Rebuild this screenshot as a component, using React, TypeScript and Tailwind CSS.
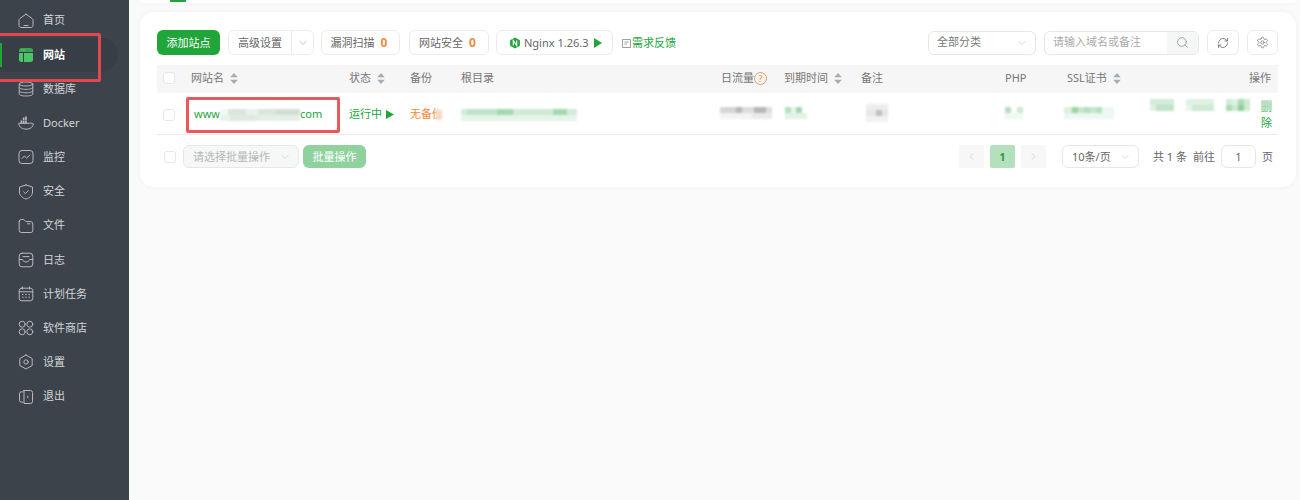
import { ChevronDown, ChevronLeft, ChevronRight, RefreshCw, Search, Settings } from "lucide-react";
import React from "react";

const ic = { width: 16, height: 16, viewBox: "0 0 16 16", fill: "none", stroke: "#b4b9bf", strokeWidth: 1, strokeLinejoin: "round" as const, strokeLinecap: "round" as const };

const HomeIcon = () => (
  <svg {...ic}><path d="M8 1.2 14.2 5.6c.5.4.8.9.8 1.5v5.4c0 1.2-.9 2-2 2H3c-1.100 0-2-.8-2-2V7.100c0-.6.300-1.100.8-1.500L8 1.200Z" /><path d="M6 12.500h4" /></svg>
);
const SiteIcon = () => (
  <svg width="16" height="16" viewBox="0 0 16 16"><path d="M3.500 1h9A2.500 2.500 0 0 1 15 3.500V5H1V3.500A2.500 2.500 0 0 1 3.500 1Z" fill="#3aa655" /><path d="M1 6h4v9H3.500A2.500 2.500 0 0 1 1 12.500V6Z" fill="#4cc568" /><path d="M6 6h9v6.500a2.500 2.500 0 0 1-2.500 2.500H6V6Z" fill="#4cc568" /><path d="M3.500 3h3" stroke="#a5e0b3" strokeWidth="0.8" strokeDasharray="1 1" /></svg>
);
const DbIcon = () => (
  <svg {...ic}><ellipse cx="8" cy="3" rx="6.800" ry="2" /><path d="M1.200 3v10c0 1.100 3 2 6.800 2s6.800-.9 6.800-2V3" /><path d="M1.200 6.400c0 1.100 3 2 6.800 2s6.800-.9 6.800-2M1.200 9.800c0 1.100 3 2 6.800 2s6.800-.9 6.800-2" /></svg>
);
const DockerIcon = () => (
  <svg width="16" height="16" viewBox="0 0 16 16" fill="#b4b9bf"><path d="M.600 8.300h11c.5 0 .9-.2 1.300-.2.800 0 1.900.3 2.500.8-.4 3.100-3.200 5.300-6.900 5.300-4.200 0-7.300-1.900-7.900-5.900Z" fill="none" stroke="#b4b9bf" /><path d="M2.500 5.500h1.700v3H2.500zM4.800 5.500h1.700v3H4.800zM7.100 5.500h1.700v3H7.100zM4.800 2.500h1.700v2.500H4.800zM7.100 1.500h1.700v3.500H7.100z" /></svg>
);
const MonitorIcon = () => (
  <svg {...ic}><rect x="1" y="1.500" width="14" height="13" rx="2.800" /><path d="M4 9.500 6.300 7l2.400 2 3.300-3" /></svg>
);
const ShieldIcon = () => (
  <svg {...ic}><path d="M8 1 14.500 3v5c0 3.500-2.800 5.900-6.500 7-3.700-1.100-6.500-3.500-6.500-7V3L8 1Z" /><path d="m5.700 8 1.700 1.600 2.900-3" /></svg>
);
const FolderIcon = () => (
  <svg {...ic}><path d="M1.200 3.500A2 2 0 0 1 3.200 1.500h2.600l2 2h4.500a2.500 2.500 0 0 1 2.500 2.500v6.500a2 2 0 0 1-2 2H3.200a2 2 0 0 1-2-2v-9Z" /><path d="M9.500 5.800h2.500" /></svg>
);
const LogIcon = () => (
  <svg {...ic}><rect x="1.200" y="1.200" width="13.600" height="13.600" rx="2.800" /><path d="M1.200 7.500h3.300c.4 1.500 1.800 2.400 3.500 2.400s3.100-.9 3.500-2.400h3.300" /><path d="M5 4.600h6" /></svg>
);
const CalendarIcon = () => (
  <svg {...ic}><rect x="1.200" y="2.200" width="13.600" height="12.600" rx="2.500" /><path d="M1.200 5.800h13.600M4.500 1v2M11.500 1v2" /><path d="M4.500 8.500h.6M7.700 8.500h.6M10.900 8.500h.6M4.500 11.200h.6M7.700 11.200h.6M10.900 11.200h.6" /></svg>
);
const StoreIcon = () => (
  <svg {...ic}><circle cx="4.200" cy="4.200" r="3" /><circle cx="11.800" cy="4.200" r="3" /><circle cx="4.200" cy="11.800" r="3" /><circle cx="11.800" cy="11.800" r="3" /></svg>
);
const GearIcon = () => (
  <svg {...ic}><path d="M8 1 14.200 4.500v7L8 15l-6.200-3.500v-7L8 1Z" /><circle cx="8" cy="8" r="2.200" /></svg>
);
const ExitIcon = () => (
  <svg {...ic}><path d="M5 2.800H3.500a2 2 0 0 0-2 2v6.400a2 2 0 0 0 2 2H5" /><path d="M6 1.500h6.500a2 2 0 0 1 2 2v9a2 2 0 0 1-2 2H6V1.500Z" /><path d="M9.800 7.200v1.600" /></svg>
);

const menu: [string, React.ReactNode][] = [
  ["首页", <HomeIcon />],
  ["网站", <SiteIcon />],
  ["数据库", <DbIcon />],
  ["Docker", <DockerIcon />],
  ["监控", <MonitorIcon />],
  ["安全", <ShieldIcon />],
  ["文件", <FolderIcon />],
  ["日志", <LogIcon />],
  ["计划任务", <CalendarIcon />],
  ["软件商店", <StoreIcon />],
  ["设置", <GearIcon />],
  ["退出", <ExitIcon />],
];

function Sidebar() {
  return (
    <div className="relative w-[129px] shrink-0 bg-[#3c434b] pt-[3.500px]">
      {menu.map(([label, icon]) => (
        <div key={label} className="relative flex h-[34.2px] items-center gap-[9px] pl-[18px]">
          {label === "网站" && (
            <>
              <div className="absolute left-0 top-0 h-full w-[118px] rounded-r-full bg-[#373e45]" />
              <div className="absolute left-0 top-[5px] h-[24px] w-[2px] bg-[#20a53a]" />
            </>
          )}
          <span className="relative flex">{icon}</span>
          <span className={label === "网站" ? "relative text-[11px] font-bold text-white" : "relative text-[11px] text-[#d3d6d9]"}>{label}</span>
        </div>
      ))}
      <div className="absolute left-[-3px] top-[33px] h-[49px] w-[104px] rounded-[2px] border-[3px] border-[#e2484d]" />
    </div>
  );
}

function ToolBtn({ children }: { children: React.ReactNode }) {
  return <div className="flex h-[25px] items-center rounded-md border border-[#ebeced] bg-white text-[11px] text-[#666]">{children}</div>;
}

function Count({ label, w }: { label: string; w: string }) {
  return (
    <div className={`flex h-[25px] ${w} items-center justify-center gap-[6px] rounded-md border border-[#ebeced] bg-white pr-[3px] pt-px text-[11px] text-[#666]`}>
      {label}
      <span className="text-[12px] font-bold leading-none text-[#ef8a3c]">0</span>
    </div>
  );
}

function Check({ className = "" }: { className?: string }) {
  return <div className={`h-[12px] w-[12px] rounded-[3px] border border-[#e6e7e9] bg-white ${className}`} />;
}

function Sort() {
  return (
    <svg width="8" height="11" viewBox="0 0 8 11" fill="#a9acb0" className="ml-[6px]"><path d="M4 0 7.800 4.300H.2L4 0ZM4 11 .2 6.700h7.600L4 11Z" /></svg>
  );
}

// pixelated patches over the hidden values
function Mosaic({ rows, className = "" }: { rows: string[][]; className?: string }) {
  return (
    <div className={`flex flex-col blur-[1px] ${className}`}>
      {rows.map((row, i) => (
        <div key={i} className="flex h-[6px]">
          {row.map((c, j) => (
            <div key={j} className={c} />
          ))}
        </div>
      ))}
    </div>
  );
}

function Header() {
  const cell = "flex items-center";
  return (
    <div className="grid h-[28px] grid-cols-[34px_158px_61px_51px_261px_62px_77px_144px_62px_83px_1fr] items-center bg-[#f6f6f6] pb-[2px] text-[11px] text-[#777]">
      <div className="pl-[6px]"><Check /></div>
      <div className={cell}>网站名<Sort /></div>
      <div className={cell}>状态<Sort /></div>
      <div>备份</div>
      <div>根目录</div>
      <div className={`${cell} ml-[-1px]`}>
        日流量
        <span className="flex h-[13px] w-[13px] items-center justify-center rounded-full border border-[#ef9a5c] text-[9px] leading-none text-[#ef8a3c]">?</span>
      </div>
      <div className={cell}>到期时间<Sort /></div>
      <div>备注</div>
      <div>PHP</div>
      <div className={cell}>SSL证书<Sort /></div>
      <div className="pr-[7px] text-right">操作</div>
    </div>
  );
}

function Row() {
  return (
    <div className="grid h-[42px] grid-cols-[34px_158px_61px_51px_261px_62px_77px_144px_62px_83px_1fr] items-center border-b border-[#e9e9ef] pt-[2px] text-[11px]">
      <div className="pl-[6px]"><Check /></div>
      <div className="relative flex h-full items-center pl-[3px] text-[11px] text-[#20a53a]">
        <span>www</span>
        <Mosaic
          className="w-[80px]"
          rows={[["w-[8px] bg-[#f4f8f5]", "w-[18px] bg-[#d9e6dc]", "w-[12px] bg-[#eaf0ec]", "w-[18px] bg-[#d9e6dc]", "w-[24px] bg-[#cfe0d3]"], ["w-[10px] bg-[#eaf1ec]", "w-[26px] bg-[#dfe9e2]", "w-[22px] bg-[#e6eee8]", "w-[22px] bg-[#e6eee8]"]]}
        />
        <span>com</span>
        <div className="absolute left-[-5px] top-[2px] h-[36px] w-[154px] rounded-[2px] border-[3px] border-[#ea585c]" />
      </div>
      <div className="flex items-center text-[#20a53a]">
        运行中
        <svg width="8" height="9" viewBox="0 0 8 9" className="ml-[4px]" fill="#20a53a"><path d="M0 0 8 4.500 0 9Z" /></svg>
      </div>
      <div className="relative text-[#ef8a3c]">
        <span className="block whitespace-nowrap">无备份</span>
        <div className="absolute left-[27px] top-0 h-full w-[9px] bg-white blur-[1px]" />
        <div className="absolute left-[26px] top-[4px] h-[10px] w-[6px] bg-[#f8d9c2] blur-[1px]" />
      </div>
      <Mosaic
        className="w-[116px]"
        rows={[["w-[6px] bg-[#d3ebd8]", "w-[30px] bg-[#bfe3c7]", "w-[16px] bg-[#a3d8af]", "w-[40px] bg-[#cfe9d5]", "w-[14px] bg-[#a3d8af]", "w-[10px] bg-[#d3ebd8]"], ["w-[116px] bg-[#e5f4e8]"]]}
      />
      <Mosaic
        className="ml-[-2px] mt-[-3px] w-[52px]"
        rows={[["w-[16px] bg-[#d3d5d7]", "w-[6px] bg-[#b5b7b9]", "w-[12px] bg-[#dcdddf]", "w-[12px] bg-[#b5b7b9]", "w-[6px] bg-[#dcdddf]"], ["w-[32px] bg-[#f3f3f4]", "w-[20px] bg-[#e9eaeb]"]]}
      />
      <Mosaic
        className="ml-[1px] mt-[-3px] w-[22px]"
        rows={[["w-[6px] bg-[#b5dfbf]", "w-[5px] bg-[#e9f5ec]", "w-[6px] bg-[#a3d8af]", "w-[5px] bg-white"], ["w-[22px] bg-[#e3f3e7]"]]}
      />
      <Mosaic
        className="ml-[5px] mt-[-3px] w-[22px]"
        rows={[["w-[22px] bg-[#eeeeef]"], ["w-[10px] bg-[#e8e8e9]", "w-[6px] bg-[#bfc0c1]", "w-[6px] bg-[#e4e5e6]"], ["w-[22px] bg-[#f2f2f3]"]]}
      />
      <Mosaic
        className="mt-[-3px] w-[18px]"
        rows={[["w-[6px] bg-[#b5dfbf]", "w-[6px] bg-white", "w-[6px] bg-[#cfe9d5]"], ["w-[18px] bg-[#f0f8f2]"]]}
      />
      <Mosaic
        className="ml-[-3px] mt-[-3px] w-[50px]"
        rows={[["w-[8px] bg-[#dcefe0]", "w-[6px] bg-[#98d3a5]", "w-[6px] bg-[#c8e6cf]", "w-[6px] bg-[#b5dfbf]", "w-[6px] bg-[#c8e6cf]", "w-[6px] bg-[#b5dfbf]", "w-[12px] bg-[#eef7f0]"], ["w-[50px] bg-[#eef7f0]"]]}
      />
      <div className="flex items-start justify-end pr-[6px] text-[#20a53a]">
        <div className="flex flex-1 gap-[12px]">
          <Mosaic className="w-[24px]" rows={[["w-[24px] bg-[#d3ebd8]"], ["w-[6px] bg-[#dff1e3]", "w-[18px] bg-[#bfe3c7]"]]} />
          <Mosaic className="w-[28px]" rows={[["w-[28px] bg-[#dff1e3]"], ["w-[6px] bg-[#e9f5ec]", "w-[22px] bg-[#cfe9d5]"]]} />
          <Mosaic className="w-[24px]" rows={[["w-[6px] bg-[#d3ebd8]", "w-[6px] bg-[#dff1e3]", "w-[6px] bg-[#a9dab4]", "w-[6px] bg-[#cfe9d5]"], ["w-[6px] bg-[#a9dab4]", "w-[6px] bg-[#cfe9d5]", "w-[6px] bg-[#8fcf9c]", "w-[6px] bg-[#cfe9d5]"]]} />
        </div>
        <div className="relative w-[11px] leading-[16px]">
          删除
          <div className="absolute left-0 top-[1px] h-[11px] w-[11px] bg-[#bfe3c7] opacity-80" />
        </div>
      </div>
    </div>
  );
}

function Footer() {
  return (
    <div className="flex items-center pt-[10px] text-[11px] text-[#666]">
      <Check className="ml-[7px] bg-[#fafafa]" />
      <div className="ml-[7px] flex h-[23px] w-[116px] items-center justify-between rounded-md border border-[#e6e7e8] bg-[#f6f7f7] pl-[9px] pr-[7px] pt-px text-[#b5b8bb]">
        请选择批量操作
        <ChevronDown size={12} strokeWidth={1.2} className="text-[#c0c3c6]" />
      </div>
      <div className="ml-[4px] flex h-[23px] w-[63px] items-center justify-center rounded-md bg-[#90d29d] pt-px text-white">批量操作</div>
      <div className="ml-auto flex h-[23px] w-[25px] items-center justify-center rounded-[2px] bg-[#f7f7f7] text-[#b8bbbe]">
        <ChevronLeft size={11} strokeWidth={1.2} />
      </div>
      <div className="ml-[6px] flex h-[23px] w-[25px] items-center justify-center rounded-[2px] bg-[#b5e0bd] pt-px font-bold text-[#2a9a45]">1</div>
      <div className="ml-[6px] flex h-[23px] w-[25px] items-center justify-center rounded-[2px] bg-[#f7f7f7] text-[#b8bbbe]">
        <ChevronRight size={11} strokeWidth={1.2} />
      </div>
      <div className="ml-[16px] flex h-[23px] w-[77px] items-center justify-between rounded-md border border-[#e6e7e8] bg-white pl-[9px] pr-[7px] pt-px">
        10条/页
        <ChevronDown size={12} strokeWidth={1.2} className="text-[#c0c3c6]" />
      </div>
      <span className="ml-[14px] mt-px whitespace-pre">共 1 条</span>
      <span className="ml-[6px] mt-px">前往</span>
      <div className="ml-[6px] flex h-[23px] w-[35px] items-center justify-center rounded-md border border-[#e6e7e8] bg-white pt-px">1</div>
      <span className="ml-[6px] mr-[5px] mt-px">页</span>
    </div>
  );
}

export default function App() {
  return (
    <div className="flex h-[500px] w-[1300px] overflow-hidden bg-[#fafafa] font-['Noto_Sans','Noto_Sans_CJK_SC',sans-serif]">
      <Sidebar />
      <div className="flex-1 pl-[11px] pr-[4px]">
        <div className="h-[3px] rounded-b-md bg-white pl-[30px] shadow-[0_1px_4px_rgba(0,0,0,0.04)]">
          <div className="h-[2px] w-[16px] bg-[#20a53a]" />
        </div>
        <div className="mt-[9px] h-[175px] rounded-[14px] bg-white pl-[17px] pr-[18px] pt-[18px] shadow-[0_0_6px_rgba(0,0,0,0.04)]">
          <div className="flex h-[25px] items-center">
            <div className="flex h-[25px] w-[63px] items-center justify-center rounded-md bg-[#20a53a] pt-px text-[11px] text-white">添加站点</div>
            <div className="ml-[8px]">
              <ToolBtn>
                <span className="flex w-[62px] justify-center pt-px">高级设置</span>
                <span className="flex h-full w-[22px] items-center justify-center border-l border-[#ebeced]">
                  <ChevronDown size={12} strokeWidth={1.2} className="text-[#999]" />
                </span>
              </ToolBtn>
            </div>
            <Count label="漏洞扫描" w="ml-[7px] w-[79px]" />
            <Count label="网站安全" w="ml-[9px] w-[80px]" />
            <div className="ml-[7px]">
              <ToolBtn>
                <span className="flex w-[115px] items-center pl-[12px] pt-px">
                  <svg width="12" height="12" viewBox="0 0 14 14" className="mr-[3px]"><path d="M7 .5 12.700 3.700v6.600L7 13.500 1.300 10.300V3.700Z" fill="#20a53a" /><path d="M5 10V4.200L9 10V4.200" fill="none" stroke="#fff" strokeWidth="1.300" /></svg>
                  Nginx 1.26.3
                  <svg width="8" height="10" viewBox="0 0 8 10" className="ml-[5px]" fill="#20a53a"><path d="M0 0 8 5 0 10Z" /></svg>
                </span>
              </ToolBtn>
            </div>
            <div className="ml-[9px] flex items-center pt-px text-[11px] text-[#20a53a]">
              <svg width="9" height="9" viewBox="0 0 9 9" fill="none" stroke="#888" strokeWidth="0.8" className="mr-px"><path d="M.5.5h8v8h-8zM2.500 3h4M2.500 5h2.500" /></svg>
              需求反馈
            </div>
            <div className="ml-auto flex h-[24px] w-[108px] items-center justify-between rounded-md border border-[#e6e7e8] pl-[8px] pr-[7px] text-[11px] text-[#777]">
              全部分类
              <ChevronDown size={12} strokeWidth={1.2} className="text-[#b5b8bb]" />
            </div>
            <div className="ml-[8px] flex h-[24px] w-[155px] overflow-hidden rounded-md border border-[#e6e7e8] text-[11px] text-[#aaa]">
              <div className="flex flex-1 items-center pl-[8px]">请输入域名或备注</div>
              <div className="flex w-[31px] items-center justify-center bg-[#f5f6f6]">
                <Search size={13} strokeWidth={1.1} className="text-[#777]" />
              </div>
            </div>
            <div className="ml-[8px] flex h-[25px] w-[32px] items-center justify-center rounded-md border border-[#ebeced]">
              <RefreshCw size={12} strokeWidth={1.4} className="text-[#555]" />
            </div>
            <div className="ml-[8px] flex h-[25px] w-[31px] items-center justify-center rounded-md border border-[#ebeced]">
              <Settings size={13} strokeWidth={1.1} className="text-[#555]" />
            </div>
          </div>
          <div className="mt-[10px]">
            <Header />
            <Row />
            <Footer />
          </div>
        </div>
      </div>
    </div>
  );
}
